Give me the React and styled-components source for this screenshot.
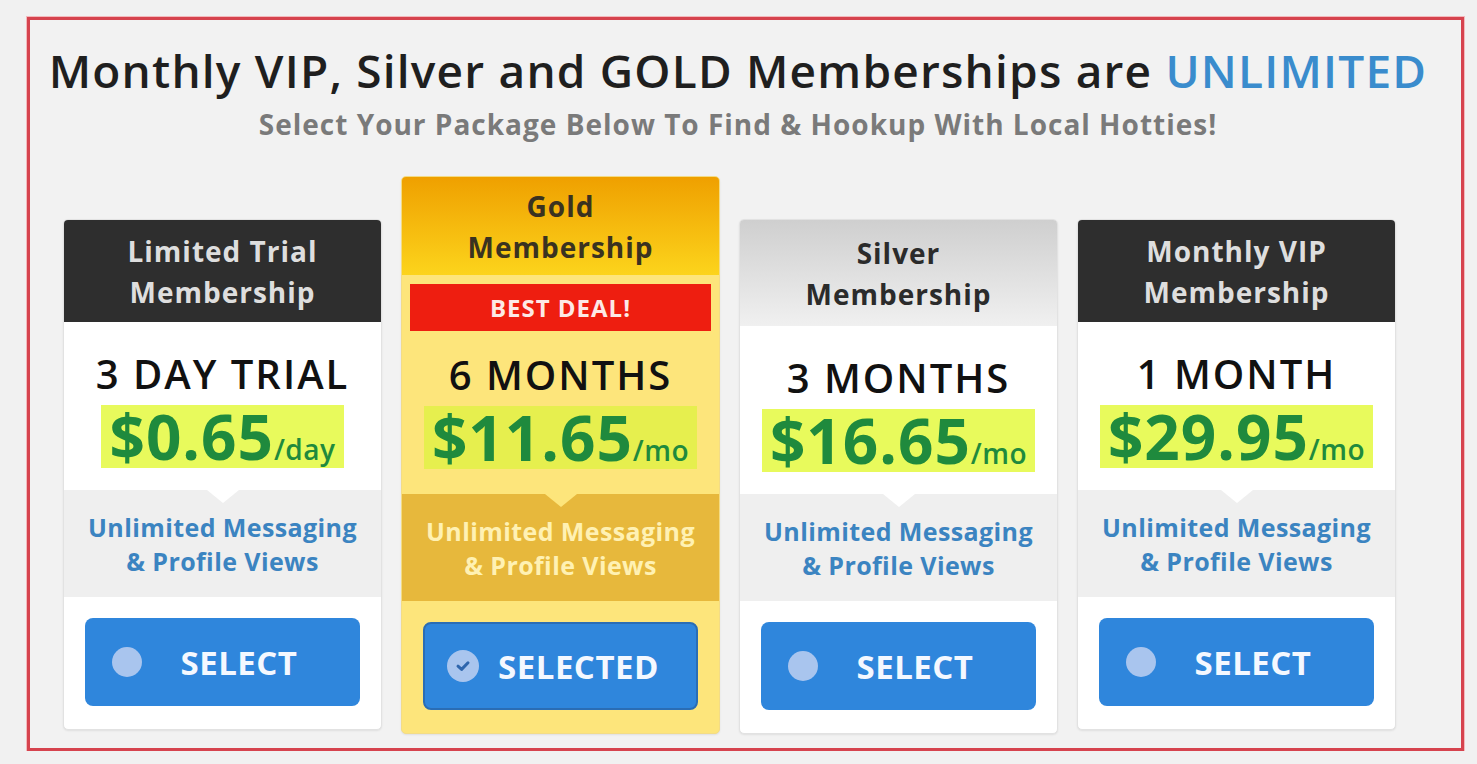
import React from 'react'
import styled, { createGlobalStyle, css } from 'styled-components'

const GlobalStyle = createGlobalStyle`
  html, body {
    margin: 0;
    padding: 0;
    background: #f1f1f1;
    font-family: "Open Sans", "Noto Sans", sans-serif;
  }
`

const Page = styled.div`
  padding: 17px 0 0 27px;
`

const Frame = styled.section`
  box-sizing: border-box;
  width: 1437px;
  height: 734px;
  border: 3px solid #d6434e;
  box-shadow: 0 0 0 1px #f3b9bc;
  background: #f2f2f2;
  padding: 24px 33px 0 18px;
`

const Title = styled.h1`
  margin: 0;
  font-size: 46px;
  line-height: 53px;
  font-weight: 600;
  letter-spacing: 1.2px;
  color: #1f1f1f;
  text-align: center;
  white-space: nowrap;
`

const Accent = styled.span`
  color: #3a8ccd;
`

const Subtitle = styled.p`
  margin: 11px 0 0;
  font-size: 28px;
  line-height: 32px;
  font-weight: 700;
  letter-spacing: 1px;
  color: #7a7a7a;
  text-align: center;
  white-space: nowrap;
`

const PlanRow = styled.div`
  display: flex;
  align-items: flex-start;
  gap: 19px;
  margin: 36px 0 0 15px;
`

const Card = styled.article`
  box-sizing: border-box;
  width: 319px;
  display: flex;
  flex-direction: column;
  margin-top: ${(p) => (p.$featured ? '0' : '43px')};
  border: 1px solid ${(p) => (p.$featured ? '#f3dc86' : '#e2e2e2')};
  border-radius: 5px;
  overflow: hidden;
  background: ${(p) => (p.$featured ? '#fde57b' : '#fff')};
  box-shadow: 0 1px 2px rgba(0, 0, 0, 0.08);
`

const headerTones = {
  dark: css`
    background: #2e2e2e;
    color: #dedede;
  `,
  gold: css`
    background: linear-gradient(#efa000, #fcd41c);
    color: #3a3220;
  `,
  silver: css`
    background: linear-gradient(#cfcfcf, #f0f0f0);
    color: #2b2b2b;
  `,
}

const CardHeader = styled.header`
  display: flex;
  align-items: center;
  justify-content: center;
  height: ${(p) => p.$height}px;
  padding-top: 2px;
  box-sizing: border-box;
  font-size: 28px;
  line-height: 41px;
  font-weight: 700;
  letter-spacing: 1px;
  text-align: center;
  ${(p) => headerTones[p.$tone]}
`

const CardBody = styled.div`
  display: flex;
  flex-direction: column;
  align-items: center;
  padding: ${(p) => (p.$featured ? '9px 8px 25px' : '26px 0 22px')};
`

const Badge = styled.div`
  align-self: stretch;
  height: 47px;
  margin-bottom: 18px;
  display: flex;
  align-items: center;
  justify-content: center;
  background: #ee1e10;
  color: #fde9e6;
  font-size: 24px;
  font-weight: 700;
  letter-spacing: 1px;
`

const Term = styled.div`
  font-size: 40px;
  line-height: 52px;
  font-weight: 600;
  letter-spacing: 2px;
  color: #111;
  margin-bottom: 5px;
  white-space: nowrap;
`

const Price = styled.div`
  display: flex;
  align-items: baseline;
  height: 63px;
  padding: 0 8px;
  background: ${(p) => (p.$featured ? '#e6ef4e' : '#e8fa5c')};
  color: #1f8a3d;
  white-space: nowrap;
`

const Amount = styled.span`
  font-size: 62px;
  line-height: 63px;
  font-weight: 700;
  letter-spacing: 1px;
`

const Unit = styled.span`
  font-size: 28px;
  font-weight: 600;
  letter-spacing: 0.5px;
`

const Feature = styled.div`
  position: relative;
  height: 107px;
  display: flex;
  align-items: center;
  justify-content: center;
  background: ${(p) => (p.$featured ? '#e7b83c' : '#efefef')};
  color: ${(p) => (p.$featured ? '#fff1b3' : '#3b84c1')};
  font-size: 25px;
  line-height: 34px;
  font-weight: 700;
  letter-spacing: 0.4px;
  text-align: center;

  &::before {
    content: '';
    position: absolute;
    top: 0;
    left: 50%;
    transform: translateX(-50%);
    border-left: 16px solid transparent;
    border-right: 16px solid transparent;
    border-top: 13px solid ${(p) => (p.$featured ? '#fde57b' : '#fff')};
  }
`

const Action = styled.div`
  padding: 21px 21px 23px;
`

const SelectButton = styled.button`
  box-sizing: border-box;
  width: 100%;
  height: 88px;
  display: flex;
  align-items: center;
  padding: 0 0 0 ${(p) => (p.$selected ? '22px' : '27px')};
  border: ${(p) => (p.$selected ? '2px solid #2a6db5' : 'none')};
  border-radius: 8px;
  background: #2f86dc;
  color: #f4f8ff;
  font-family: inherit;
  font-size: 33px;
  font-weight: 700;
  letter-spacing: 0.5px;
  cursor: pointer;
`

const Dot = styled.span`
  flex: none;
  width: ${(p) => (p.$selected ? '32px' : '30px')};
  height: ${(p) => (p.$selected ? '32px' : '30px')};
  border-radius: 50%;
  background: #a9c5ee;
  display: flex;
  align-items: center;
  justify-content: center;
`

const ButtonLabel = styled.span`
  flex: 1;
  text-align: center;
  padding-right: ${(p) => (p.$selected ? '18px' : '24px')};
`

const plans = [
  {
    name: ['Limited Trial', 'Membership'],
    tone: 'dark',
    term: '3 DAY TRIAL',
    amount: '$0.65',
    unit: '/day',
  },
  {
    name: ['Gold', 'Membership'],
    tone: 'gold',
    term: '6 MONTHS',
    amount: '$11.65',
    unit: '/mo',
    featured: true,
  },
  {
    name: ['Silver', 'Membership'],
    tone: 'silver',
    term: '3 MONTHS',
    amount: '$16.65',
    unit: '/mo',
  },
  {
    name: ['Monthly VIP', 'Membership'],
    tone: 'dark',
    term: '1 MONTH',
    amount: '$29.95',
    unit: '/mo',
  },
]

const Check = () => (
  <svg width="20" height="20" viewBox="0 0 20 20">
    <path d="M5 10.2 L8.6 13.4 L15 6.8" fill="none" stroke="#2f66ad" strokeWidth="3" strokeLinecap="round" strokeLinejoin="round" />
  </svg>
)

const headerHeight = (plan) => {
  if (plan.featured) return 98
  if (plan.tone === 'silver') return 106
  return 102
}

const Plan = ({ plan }) => {
  const selected = !!plan.featured
  return (
    <Card $featured={selected}>
      <CardHeader $tone={plan.tone} $height={headerHeight(plan)}>
        <div>
          {plan.name[0]}
          <br />
          {plan.name[1]}
        </div>
      </CardHeader>

      <CardBody $featured={selected}>
        {selected && <Badge>BEST DEAL!</Badge>}
        <Term>{plan.term}</Term>
        <Price $featured={selected}>
          <Amount>{plan.amount}</Amount>
          <Unit>{plan.unit}</Unit>
        </Price>
      </CardBody>

      <Feature $featured={selected}>
        <div>
          Unlimited Messaging
          <br />
          &amp; Profile Views
        </div>
      </Feature>

      <Action>
        <SelectButton $selected={selected}>
          <Dot $selected={selected}>{selected && <Check />}</Dot>
          <ButtonLabel $selected={selected}>{selected ? 'SELECTED' : 'SELECT'}</ButtonLabel>
        </SelectButton>
      </Action>
    </Card>
  )
}

const App = () => {
  return (
    <>
      <GlobalStyle />
      <Page>
        <Frame>
          <Title>
            Monthly VIP, Silver and GOLD Memberships are <Accent>UNLIMITED</Accent>
          </Title>
          <Subtitle>Select Your Package Below To Find &amp; Hookup With Local Hotties!</Subtitle>

          <PlanRow>
            {plans.map((plan) => (
              <Plan key={plan.term} plan={plan} />
            ))}
          </PlanRow>
        </Frame>
      </Page>
    </>
  )
}

export default App
